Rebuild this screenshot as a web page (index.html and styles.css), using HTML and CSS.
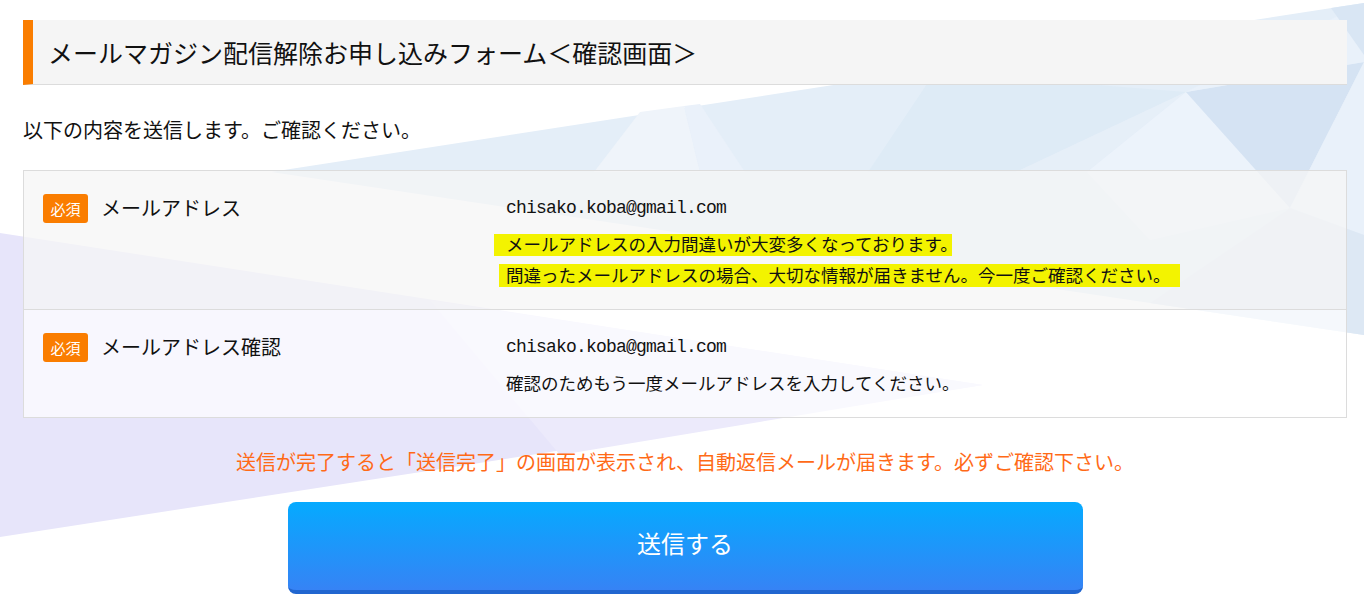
FILE: index.html
```html
<!DOCTYPE html>
<html lang="ja">
<head>
  <meta charset="UTF-8">
  <title>メールマガジン配信解除お申し込みフォーム＜確認画面＞</title>
  <link rel="stylesheet" href="styles.css">
</head>
<body>

  <!-- low poly background -->
  <svg class="bg" width="1364" height="611" viewBox="0 0 1364 611">
    <polygon points="0,233 983,385 0,537" fill="#e7e5fa"/>
    <polygon points="430,300 983,385 560,455" fill="#eceafb"/>
    <polygon points="271,172 1364,3 1364,335" fill="#e4eef8"/>
    <polygon points="594,172 640,112 684,106 700,172" fill="#eff4fa"/>
    <polygon points="684,106 700,104 745,172 700,172" fill="#eaf1fa"/>
    <polygon points="868,172 935,72 1186,92 1016,172" fill="#deebf6"/>
    <polygon points="1016,172 1186,92 1087,172" fill="#e6eff8"/>
    <polygon points="1087,172 1186,92 1290,208 1150,240" fill="#ecf3fb"/>
    <polygon points="1186,92 1364,62 1290,208" fill="#d5e3f3"/>
    <polygon points="1290,208 1364,62 1364,235" fill="#e9f1fa"/>
    <polygon points="1290,208 1364,235 1364,335 1150,303" fill="#dde8f4"/>
    <polygon points="1186,92 1364,3 1364,62" fill="#e9f1fa"/>
    <polygon points="1331,8 1364,3 1364,55" fill="#d9e6f4"/>
  </svg>

  <main class="page">
    <h1 class="page-title">メールマガジン配信解除お申し込みフォーム＜確認画面＞</h1>
    <p class="lead">以下の内容を送信します。ご確認ください。</p>

    <div class="confirm-table">
      <!-- メールアドレス -->
      <div class="row row-mail">
        <div class="row-head">
          <span class="badge">必須</span>
          <span class="label">メールアドレス</span>
        </div>
        <div class="row-body">
          <p class="mail">chisako.koba@gmail.com</p>
          <p class="hint"><span class="marker marker-1">メールアドレスの入力間違いが大変多くなっております。</span></p>
          <p class="hint"><span class="marker marker-2">間違ったメールアドレスの場合、大切な情報が届きません。今一度ご確認ください。</span></p>
        </div>
      </div>

      <!-- メールアドレス確認 -->
      <div class="row row-check">
        <div class="row-head">
          <span class="badge">必須</span>
          <span class="label">メールアドレス確認</span>
        </div>
        <div class="row-body">
          <p class="mail">chisako.koba@gmail.com</p>
          <p class="hint">確認のためもう一度メールアドレスを入力してください。</p>
        </div>
      </div>
    </div>

    <p class="notice">送信が完了すると「送信完了」の画面が表示され、自動返信メールが届きます。必ずご確認下さい。</p>

    <button class="submit" type="button">送信する</button>
  </main>

</body>
</html>
```

FILE: styles.css
```css
body {
  margin: 0;
  font-family: "Noto Sans CJK JP", sans-serif;
  color: #111;
  background: #fff;
  position: relative;
  min-height: 611px;
  overflow: hidden;
}

.bg {
  position: absolute;
  top: 0;
  left: 0;
  z-index: 0;
}

.page {
  position: relative;
  z-index: 1;
  width: 1324px;
  margin-left: 23px;
  padding-top: 20px;
}

.page-title {
  margin: 0;
  height: 64px;
  line-height: 64px;
  padding-left: 15px;
  font-size: 25px;
  font-weight: normal;
  color: #111;
  background: #f5f5f5;
  border-left: 10px solid #fa7d00;
  border-bottom: 1px solid #dcdcdc;
}

.lead {
  margin: 30px 0 0;
  font-size: 20px;
  line-height: 30px;
}

.confirm-table {
  margin-top: 25px;
  border: 1px solid #dcdcdc;
}

.row {
  display: flex;
  padding: 23px 0 19px;
}

.row + .row {
  border-top: 1px solid #dcdcdc;
}

.row-mail {
  background: rgba(245, 245, 245, 0.75);
}

.row-check {
  background: rgba(255, 255, 255, 0.7);
}

.row-head {
  width: 463px;
  padding-left: 19px;
  display: flex;
  align-items: flex-start;
  gap: 13px;
}

.badge {
  width: 45px;
  height: 29px;
  line-height: 29px;
  text-align: center;
  font-size: 15px;
  color: #fff;
  background: #fa7d00;
  border-radius: 3px;
}

.label {
  font-size: 20px;
  line-height: 28px;
}

.mail {
  margin: 0;
  font-family: "Liberation Mono", monospace;
  font-size: 18px;
  letter-spacing: -0.8px;
  line-height: 28px;
}

.hint {
  margin: 0;
  font-size: 17.5px;
  line-height: 31px;
}

.mail + .hint {
  margin-top: 6px;
}

.marker {
  background-image: linear-gradient(#f3f300, #f3f300);
  background-repeat: no-repeat;
}

.marker-1 {
  padding-left: 12px;
  margin-left: -12px;
  background-position: 0 3px;
  background-size: calc(100% - 6px) 22px;
}

.marker-2 {
  padding: 0 10px 0 7px;
  margin-left: -7px;
  background-position: 0 2px;
  background-size: 100% 24px;
}

.notice {
  margin: 29px 0 0;
  text-align: center;
  font-size: 20px;
  line-height: 30px;
  color: #ff6a17;
}

.submit {
  display: block;
  width: 795px;
  height: 92px;
  margin: 25px auto 0;
  padding: 0 0 7px;
  font-family: inherit;
  font-size: 24px;
  color: #fff;
  background: linear-gradient(#05aaff, #3683f5);
  border: none;
  border-bottom: 4px solid #2166d0;
  border-radius: 8px;
  cursor: pointer;
}
```
